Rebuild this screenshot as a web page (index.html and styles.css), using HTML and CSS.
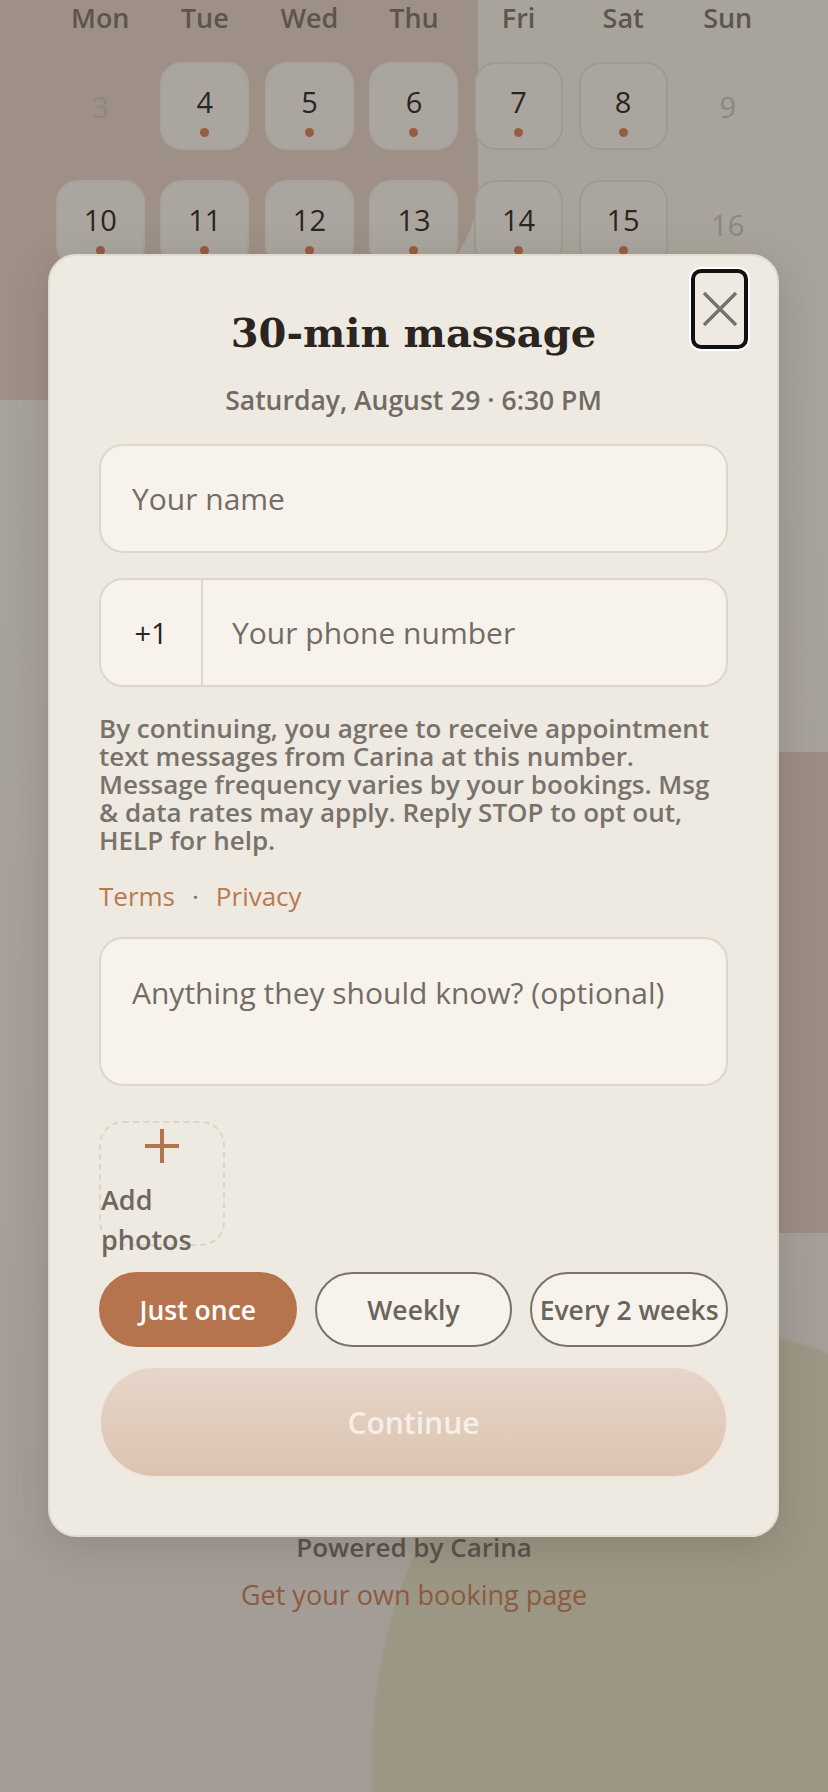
FILE: index.html
```html
<!DOCTYPE html>
<html lang="en">

<head>
    <meta charset="UTF-8">
    <meta name="viewport" content="width=device-width, initial-scale=1.0">
    <title>Book a 30-min massage</title>
    <link rel="stylesheet" href="styles.css">
</head>

<body>
    <main class="page">
        <section class="calendar">
            <div class="weekdays">
                <span>Mon</span><span>Tue</span><span>Wed</span><span>Thu</span><span>Fri</span><span>Sat</span><span>Sun</span>
            </div>
            <div class="days">
                <span class="day off">3</span>
                <button class="day">4<i class="dot"></i></button>
                <button class="day">5<i class="dot"></i></button>
                <button class="day">6<i class="dot"></i></button>
                <button class="day edge">7<i class="dot"></i></button>
                <button class="day edge">8<i class="dot"></i></button>
                <span class="day off">9</span>

                <button class="day">10<i class="dot"></i></button>
                <button class="day">11<i class="dot"></i></button>
                <button class="day">12<i class="dot"></i></button>
                <button class="day">13<i class="dot"></i></button>
                <button class="day edge">14<i class="dot"></i></button>
                <button class="day edge">15<i class="dot"></i></button>
                <span class="day off">16</span>
            </div>
        </section>

        <footer class="powered">
            <p>Powered by Carina</p>
            <a href="#">Get your own booking page</a>
        </footer>
    </main>

    <div class="sheet">
        <button class="close" aria-label="Close">
            <svg width="36" height="36" viewBox="0 0 36 36">
                <path d="M2 2 L34 34 M34 2 L2 34" stroke="#77716a" stroke-width="3.4" fill="none" />
            </svg>
        </button>

        <h2 class="title">30-min massage</h2>
        <p class="when">Saturday, August 29 · 6:30 PM</p>

        <form class="booking">
            <input class="field" type="text" placeholder="Your name">

            <div class="field phone">
                <span class="code">+1</span>
                <input type="tel" placeholder="Your phone number">
            </div>

            <p class="consent">By continuing, you agree to receive appointment text messages from Carina at this number. Message frequency varies by your bookings. Msg &amp; data rates may apply. Reply STOP to opt out, HELP for help.</p>
            <p class="legal"><a href="#">Terms</a><span class="sep">·</span><a href="#">Privacy</a></p>

            <textarea class="field notes" placeholder="Anything they should know? (optional)"></textarea>

            <label class="photos">
                <svg class="plus" width="34" height="34" viewBox="0 0 34 34">
                    <path d="M17 0 V34 M0 17 H34" stroke="#b5734d" stroke-width="4" fill="none" />
                </svg>
                <span>Add photos</span>
            </label>

            <div class="repeat">
                <button type="button" class="pill active">Just once</button>
                <button type="button" class="pill">Weekly</button>
                <button type="button" class="pill">Every 2 weeks</button>
            </div>

            <button class="continue" disabled>Continue</button>
        </form>
    </div>
</body>

</html>
```

FILE: styles.css
```css
html {
    overflow: hidden;
}

body {
    position: relative;
    margin: 0;
    min-height: 1792px;
    overflow: hidden;
    font-family: "Open Sans", "Noto Sans", sans-serif;
    background-color: #a6a199;
    background-image:
        radial-gradient(ellipse 350px 430px at 720px 1760px, #9c9684 99%, transparent 100%),
        linear-gradient(180deg, #a8a49c 0%, #a6a099 60%, #a39c96 100%);
}

/* soft shapes behind everything */
body::before,
body::after {
    content: "";
    position: absolute;
    z-index: -1;
}

body::before {
    left: 0;
    top: 0;
    width: 478px;
    height: 400px;
    background: #9e9086;
    border-bottom-right-radius: 430px 210px;
}

body::after {
    left: 660px;
    top: 752px;
    width: 168px;
    height: 481px;
    background: #9b8c84;
    border-radius: 120px 0 0 120px;
}

.page {
    padding: 0 48px;
}

/* calendar behind the sheet */
.weekdays,
.days {
    display: grid;
    grid-template-columns: repeat(7, 1fr);
    justify-items: center;
}

.weekdays {
    padding-top: 1px;
    margin-bottom: 27px;
    font-size: 27px;
    line-height: 34px;
    font-weight: 600;
    color: #5c554d;
}

.days {
    row-gap: 30px;
}

.day {
    box-sizing: border-box;
    width: 89px;
    height: 88px;
    display: flex;
    flex-direction: column;
    align-items: center;
    justify-content: center;
    font-family: inherit;
    font-size: 29px;
    font-weight: 500;
    color: #2a2520;
    background: #aaa69f;
    border: 2px solid #a7a29b;
    border-radius: 22px;
    padding: 6px 0 0;
}

.day.edge {
    border-color: #9f9a91;
}

.dot {
    width: 9px;
    height: 9px;
    margin-top: 7px;
    border-radius: 50%;
    background: #975d40;
}

.day.off {
    background: none;
    border-color: transparent;
    color: #8d877f;
    padding-top: 0;
}

.powered {
    margin-top: 1262px;
    text-align: center;
}

.powered p {
    margin: 0;
    font-size: 26px;
    line-height: 34px;
    font-weight: 600;
    color: #5a534b;
}

.powered a {
    display: inline-block;
    margin-top: 14px;
    font-size: 27px;
    line-height: 34px;
    font-weight: 500;
    color: #8c5a3e;
    text-decoration: none;
}

/* booking sheet */
.sheet {
    position: absolute;
    top: 254px;
    left: 48px;
    width: 731px;
    box-sizing: border-box;
    padding: 49px 49px 57px;
    background: #eee9e1;
    border: 2px solid #e2dbcf;
    border-radius: 28px;
    box-shadow: 0 10px 40px rgba(60, 45, 35, 0.18);
}

.close {
    position: absolute;
    top: 13px;
    right: 29px;
    width: 57px;
    height: 80px;
    padding: 0;
    display: flex;
    align-items: center;
    justify-content: center;
    background: #eee9e1;
    border: 4px solid #111;
    border-radius: 10px;
    box-shadow: 0 0 0 2px #fff;
}

.title {
    margin: 0;
    text-align: center;
    font-family: "DejaVu Serif", Georgia, serif;
    font-size: 40px;
    line-height: 56px;
    font-weight: bold;
    color: #2a2520;
}

.when {
    margin: 22px 0 0;
    text-align: center;
    font-size: 26.5px;
    line-height: 34px;
    font-weight: 600;
    color: #716b63;
}

.booking {
    display: flex;
    flex-direction: column;
    margin-top: 27px;
}

.field {
    box-sizing: border-box;
    width: 100%;
    height: 109px;
    padding: 0 31px;
    font-family: inherit;
    font-size: 30px;
    color: #2a2520;
    background: #f7f3ec;
    border: 2px solid #ded7c9;
    border-radius: 24px;
    outline: none;
}

.field::placeholder {
    color: #736c64;
}

.phone {
    display: flex;
    align-items: stretch;
    margin-top: 25px;
    padding: 0;
}

.phone .code {
    display: flex;
    align-items: center;
    justify-content: center;
    width: 100px;
    font-size: 29px;
    color: #2a2520;
    border-right: 2px solid #ded7c9;
}

.phone input {
    flex: 1;
    min-width: 0;
    padding: 0 29px;
    font-family: inherit;
    font-size: 30px;
    background: none;
    border: none;
    outline: none;
}

.phone input::placeholder {
    color: #736c64;
}

.consent {
    margin: 27px 0 0;
    font-size: 26px;
    line-height: 28px;
    font-weight: 600;
    color: #78726a;
}

.legal {
    margin: 27px 0 0;
    font-size: 26px;
    line-height: 30px;
    font-weight: 500;
}

.legal a {
    color: #b87a52;
    text-decoration: none;
}

.legal .sep {
    margin: 0 17px;
    color: #78726a;
}

.notes {
    height: 149px;
    margin-top: 26px;
    padding-top: 33px;
    resize: none;
}

.photos {
    box-sizing: border-box;
    width: 126px;
    height: 125px;
    margin-top: 35px;
    display: flex;
    flex-direction: column;
    font-size: 27px;
    line-height: 40px;
    font-weight: 600;
    color: #6e6760;
    border: 2px dashed #ddd6c6;
    border-radius: 24px;
}

.photos > * {
    flex-shrink: 0;
}

.plus {
    align-self: center;
    margin: 6px 0 17px;
}

.repeat {
    display: grid;
    grid-template-columns: repeat(3, 1fr);
    gap: 18px;
    margin-top: 26px;
}

.pill {
    height: 75px;
    padding: 0;
    font-family: inherit;
    font-size: 26.5px;
    font-weight: 600;
    color: #6b645c;
    background: #f7f3ec;
    border: 2px solid #7a7266;
    border-radius: 38px;
}

.pill.active {
    color: #fff;
    background: #b5744d;
    border-color: #b5744d;
}

.continue {
    height: 112px;
    margin-top: 19px;
    font-family: inherit;
    font-size: 30px;
    font-weight: 600;
    color: #f6efe8;
    background: linear-gradient(180deg, #e6d6c9, #dcc3b1);
    border: 2px solid #f0e6dc;
    border-radius: 56px;
}
```
